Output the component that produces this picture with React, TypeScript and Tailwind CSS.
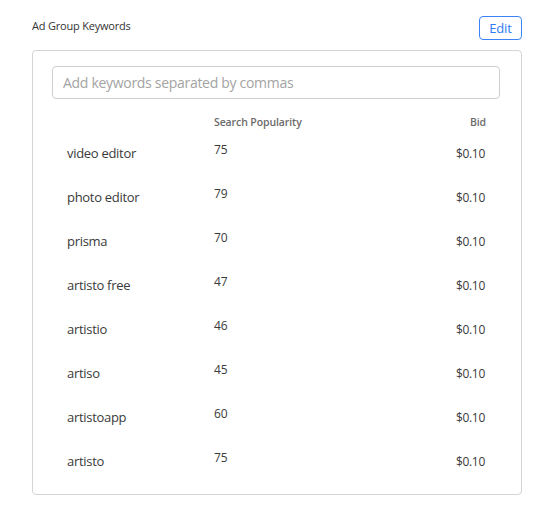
import React from "react";

const rows = [
  ["video editor", "75"],
  ["photo editor", "79"],
  ["prisma", "70"],
  ["artisto free", "47"],
  ["artistio", "46"],
  ["artiso", "45"],
  ["artistoapp", "60"],
  ["artisto", "75"],
];

export default function App() {
  return (
    <div
      className="w-[544px] h-[517px] bg-white text-[#333]"
      style={{ fontFamily: '"Open Sans", "Noto Sans", sans-serif' }}
    >
      <div className="ml-[32px] w-[490px] pt-[16px]">
        <div className="flex justify-between items-start h-[24px]">
          <div className="text-[11px] leading-[16px] mt-[2px] text-[#333] tracking-[-0.2px]">Ad Group Keywords</div>
          <button className="w-[43px] h-[24px] border border-[#3b82f6] rounded-[4px] text-[#2f7bf5] text-[13px] leading-[22px] tracking-[-0.2px]">
            Edit
          </button>
        </div>
        <div className="mt-[10px] h-[445px] border border-[#d4d4d4] rounded-[4px] pt-[15px]">
          <div className="ml-[19px] w-[448px] h-[33px] border border-[#cfcfcf] rounded-[4px] flex items-center pl-[10px] text-[14px] text-[#a3a3a3] tracking-[-0.3px]">
            Add keywords separated by commas
          </div>
          <div className="flex h-[24px] items-end mt-[6px] text-[10.5px] font-semibold text-[#6b6b6b] tracking-[-0.1px]">
            <div className="w-[181px]" />
            <div className="flex-1 leading-[14px]">Search Popularity</div>
            <div className="w-[60px] text-right pr-[35px] leading-[14px] box-content">Bid</div>
          </div>
          <div className="mt-[3px]">
            {rows.map(([k, n]) => (
              <div key={k} className="flex h-[44px] items-center">
                <div className="w-[181px] pl-[34px] text-[13px] tracking-[-0.3px] text-[#3a3a3a]">{k}</div>
                <div className="flex-1 text-[12px] text-[#3a3a3a] -mt-[8px]">{n}</div>
                <div className="w-[60px] box-content pr-[36px] text-right text-[12px] text-[#3a3a3a] tracking-[-0.3px]">$0.10</div>
              </div>
            ))}
          </div>
        </div>
      </div>
    </div>
  );
}
